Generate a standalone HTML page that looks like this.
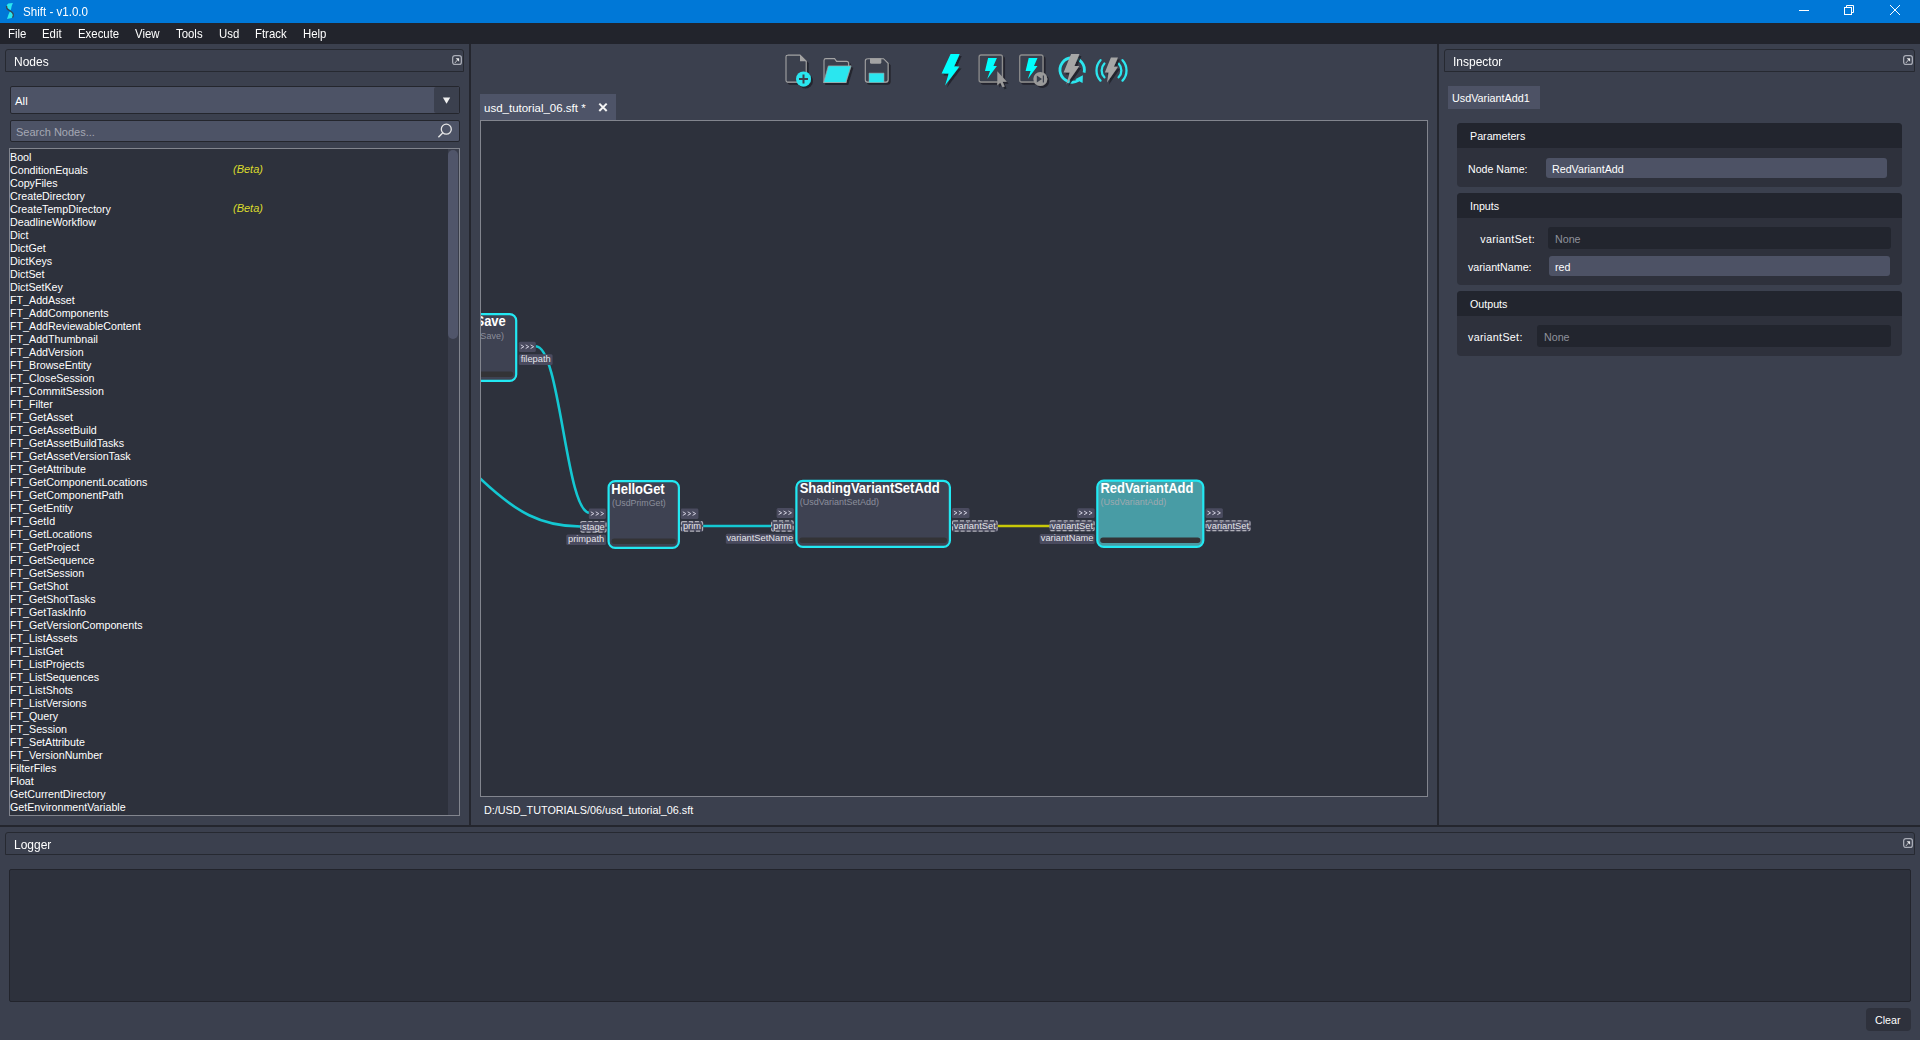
<!DOCTYPE html>
<html><head><meta charset="utf-8">
<style>
*{box-sizing:border-box;margin:0;padding:0}
html,body{width:1920px;height:1040px;overflow:hidden}
body{background:#3b404e;font-family:"Liberation Sans",sans-serif;color:#fff;position:relative}
.a{position:absolute}
.t{position:absolute;white-space:pre;line-height:1}
.hdr{position:absolute;height:23px;border:1px solid #262931;border-radius:3px 3px 0 0;background:#3b404e}
.li{position:absolute;left:0;white-space:pre;line-height:1;font-size:10.7px;color:#fff}
.li i{position:absolute;left:223px;top:-1px;color:#dcdc2c;font-style:italic;font-size:11px}
</style></head><body>
<div class="a" style="left:0px;top:0px;width:1920px;height:23px;background:#0078d7;"></div>
<div class="t" style="left:23px;top:6.20px;font-size:12.64px;color:#fff;transform:scaleX(0.9174);transform-origin:0 0;">Shift - v1.0.0</div>
<svg class="a" style="left:0;top:0" width="20" height="23" viewBox="0 0 20 23">
<path d="M6.5 7.6 Q6.2 4.6 8.4 3.6 L12.9 3 Q11.3 6 10.9 9.9 Q8.1 9.4 6.5 7.6 Z" fill="#2ae8f0"/>
<path d="M10 10.9 Q13.3 12.6 13.3 15.5 Q13.1 17.6 11.6 18.1 L7 19 Q8.2 14.8 10 10.9 Z" fill="#2ae8f0"/>
<path d="M6.6 5.8 Q6.1 8.7 9 10.3 Q13.6 12.3 13.3 15.4 Q13.1 16.8 12.4 17.6" fill="none" stroke="#3a3f4a" stroke-width="1.3" opacity="0.9"/>
</svg>
<svg class="a" style="left:1790px;top:0" width="130" height="23" viewBox="1790 0 130 23">
<path d="M1799 10.5 H1809" stroke="#fff" stroke-width="1"/>
<path d="M1846.5 7.5 V5.5 H1853.5 V12.5 H1851.5" fill="none" stroke="#fff" stroke-width="1"/>
<rect x="1844.5" y="7.5" width="7" height="7" fill="none" stroke="#fff" stroke-width="1"/>
<path d="M1890 5 L1900 15 M1900 5 L1890 15" stroke="#fff" stroke-width="1"/>
</svg>
<div class="a" style="left:0px;top:23px;width:1920px;height:21px;background:#22242c;"></div>
<div class="t" style="left:8px;top:28.18px;font-size:12.54px;color:#fff;transform:scaleX(0.9091);transform-origin:0 0;">File</div>
<div class="t" style="left:42px;top:28.18px;font-size:12.54px;color:#fff;transform:scaleX(0.9091);transform-origin:0 0;">Edit</div>
<div class="t" style="left:78px;top:28.18px;font-size:12.54px;color:#fff;transform:scaleX(0.9091);transform-origin:0 0;">Execute</div>
<div class="t" style="left:135px;top:28.18px;font-size:12.54px;color:#fff;transform:scaleX(0.9091);transform-origin:0 0;">View</div>
<div class="t" style="left:176px;top:28.18px;font-size:12.54px;color:#fff;transform:scaleX(0.9091);transform-origin:0 0;">Tools</div>
<div class="t" style="left:219px;top:28.18px;font-size:12.54px;color:#fff;transform:scaleX(0.9091);transform-origin:0 0;">Usd</div>
<div class="t" style="left:255px;top:28.18px;font-size:12.54px;color:#fff;transform:scaleX(0.9091);transform-origin:0 0;">Ftrack</div>
<div class="t" style="left:303px;top:28.18px;font-size:12.54px;color:#fff;transform:scaleX(0.9091);transform-origin:0 0;">Help</div>
<div class="a" style="left:469px;top:44px;width:2px;height:782px;background:#24262e;"></div>
<div class="a" style="left:1437px;top:44px;width:2px;height:782px;background:#24262e;"></div>
<div class="a" style="left:0px;top:825px;width:1920px;height:2px;background:#24262e;"></div>
<div class="hdr" style="left:5px;top:49px;width:459px"></div>
<div class="t" style="left:14px;top:55.93px;font-size:12.84px;color:#fff;transform:scaleX(0.9346);transform-origin:0 0;">Nodes</div>
<svg class="a" style="left:451px;top:54px" width="12" height="12" viewBox="0 0 12 12"><rect x="1.65" y="1.65" width="8.7" height="8.7" rx="2.2" fill="none" stroke="#a9acb6" stroke-width="1.3"/><path d="M4.6 4.3 H8.1 V7.8 Z" fill="#e8e8ea"/><path d="M3.9 8.6 L6.6 5.9" stroke="#d6d6da" stroke-width="1.1" stroke-dasharray="1 0.6"/></svg>
<div class="a" style="left:10px;top:86px;width:450px;height:28px;background:#4d5366;border:1px solid #24262d;border-radius:2px"></div>
<div class="a" style="left:434px;top:87px;width:25px;height:26px;background:#3b404e;border-radius:2px 2px 2px 2px"></div>
<div class="t" style="left:15px;top:96.25px;font-size:11.40px;color:#fff;">All</div>
<div class="a" style="left:10px;top:120px;width:450px;height:22px;background:#4d5366;border:1px solid #24262d;border-radius:2px"></div>
<div class="t" style="left:16px;top:126.59px;font-size:11.00px;color:#a5a8b4;">Search Nodes...</div>
<svg class="a" style="left:430px;top:88px" width="30" height="55" viewBox="430 88 30 55">
<path d="M442.9 97.6 H450.2 L446.55 103.8 Z" fill="#f0f0f0"/>
<circle cx="446.3" cy="129.2" r="5" fill="none" stroke="#e6e6e6" stroke-width="1.3"/>
<path d="M442.6 132.9 L438.4 137.2" stroke="#e6e6e6" stroke-width="1.4"/>
</svg>
<div class="a" style="left:9px;top:148px;width:451px;height:668px;background:#2d313c;border:1px solid #82858e"></div>
<div class="a" style="left:448px;top:149px;width:11px;height:666px;background:#393d4b;"></div>
<div class="a" style="left:448px;top:150px;width:10px;height:189px;background:#50556a;border-radius:5px"></div>
<div class="li" style="left:10px;top:151.54px">Bool</div>
<div class="li" style="left:10px;top:164.54px">ConditionEquals<i>(Beta)</i></div>
<div class="li" style="left:10px;top:177.54px">CopyFiles</div>
<div class="li" style="left:10px;top:190.54px">CreateDirectory</div>
<div class="li" style="left:10px;top:203.54px">CreateTempDirectory<i>(Beta)</i></div>
<div class="li" style="left:10px;top:216.54px">DeadlineWorkflow</div>
<div class="li" style="left:10px;top:229.54px">Dict</div>
<div class="li" style="left:10px;top:242.54px">DictGet</div>
<div class="li" style="left:10px;top:255.54px">DictKeys</div>
<div class="li" style="left:10px;top:268.54px">DictSet</div>
<div class="li" style="left:10px;top:281.54px">DictSetKey</div>
<div class="li" style="left:10px;top:294.54px">FT_AddAsset</div>
<div class="li" style="left:10px;top:307.54px">FT_AddComponents</div>
<div class="li" style="left:10px;top:320.54px">FT_AddReviewableContent</div>
<div class="li" style="left:10px;top:333.54px">FT_AddThumbnail</div>
<div class="li" style="left:10px;top:346.54px">FT_AddVersion</div>
<div class="li" style="left:10px;top:359.54px">FT_BrowseEntity</div>
<div class="li" style="left:10px;top:372.54px">FT_CloseSession</div>
<div class="li" style="left:10px;top:385.54px">FT_CommitSession</div>
<div class="li" style="left:10px;top:398.54px">FT_Filter</div>
<div class="li" style="left:10px;top:411.54px">FT_GetAsset</div>
<div class="li" style="left:10px;top:424.54px">FT_GetAssetBuild</div>
<div class="li" style="left:10px;top:437.54px">FT_GetAssetBuildTasks</div>
<div class="li" style="left:10px;top:450.54px">FT_GetAssetVersionTask</div>
<div class="li" style="left:10px;top:463.54px">FT_GetAttribute</div>
<div class="li" style="left:10px;top:476.54px">FT_GetComponentLocations</div>
<div class="li" style="left:10px;top:489.54px">FT_GetComponentPath</div>
<div class="li" style="left:10px;top:502.54px">FT_GetEntity</div>
<div class="li" style="left:10px;top:515.54px">FT_GetId</div>
<div class="li" style="left:10px;top:528.54px">FT_GetLocations</div>
<div class="li" style="left:10px;top:541.54px">FT_GetProject</div>
<div class="li" style="left:10px;top:554.54px">FT_GetSequence</div>
<div class="li" style="left:10px;top:567.54px">FT_GetSession</div>
<div class="li" style="left:10px;top:580.54px">FT_GetShot</div>
<div class="li" style="left:10px;top:593.54px">FT_GetShotTasks</div>
<div class="li" style="left:10px;top:606.54px">FT_GetTaskInfo</div>
<div class="li" style="left:10px;top:619.54px">FT_GetVersionComponents</div>
<div class="li" style="left:10px;top:632.54px">FT_ListAssets</div>
<div class="li" style="left:10px;top:645.54px">FT_ListGet</div>
<div class="li" style="left:10px;top:658.54px">FT_ListProjects</div>
<div class="li" style="left:10px;top:671.54px">FT_ListSequences</div>
<div class="li" style="left:10px;top:684.54px">FT_ListShots</div>
<div class="li" style="left:10px;top:697.54px">FT_ListVersions</div>
<div class="li" style="left:10px;top:710.54px">FT_Query</div>
<div class="li" style="left:10px;top:723.54px">FT_Session</div>
<div class="li" style="left:10px;top:736.54px">FT_SetAttribute</div>
<div class="li" style="left:10px;top:749.54px">FT_VersionNumber</div>
<div class="li" style="left:10px;top:762.54px">FilterFiles</div>
<div class="li" style="left:10px;top:775.54px">Float</div>
<div class="li" style="left:10px;top:788.54px">GetCurrentDirectory</div>
<div class="li" style="left:10px;top:801.54px">GetEnvironmentVariable</div>
<svg class="a" style="left:770px;top:44px" width="370" height="50" viewBox="770 44 370 50">
<defs>
<filter id="sh" x="-20%" y="-20%" width="150%" height="150%"><feOffset dx="1.5" dy="1.5" in="SourceAlpha" result="o"/><feFlood flood-color="#1e2028" flood-opacity="0.85"/><feComposite in2="o" operator="in" result="s"/><feMerge><feMergeNode in="s"/><feMergeNode in="SourceGraphic"/></feMerge></filter>
</defs>
<!-- new file -->
<g filter="url(#sh)">
<path d="M787.5 55.1 H800 L806.2 61.3 V80.5 Q806.2 82.1 804.6 82.1 H787.6 Q786 82.1 786 80.5 V56.7 Q786 55.1 787.6 55.1 Z" fill="#3b404e" stroke="#a3a3a3" stroke-width="1.1"/>
<path d="M800 55.1 V61.3 H806.2 Z" fill="#a3a3a3"/>
<circle cx="803.5" cy="78.9" r="7.5" fill="#2ce6ef"/>
<path d="M799 78.9 H808 M803.5 74.4 V83.4" stroke="#3b404e" stroke-width="2"/>
</g>
<!-- folder -->
<g filter="url(#sh)">
<path d="M824 81.8 V60.5 Q824 58.6 825.9 58.6 H834.6 L836.6 61.4 H846.6 Q848.6 61.4 848.6 63.4 V66.3 L845.8 82.5 H824 Z" fill="#3b404e" stroke="#a3a3a3" stroke-width="1.1"/>
<path d="M828.3 65.9 H851 L845.8 82.5 H823.6 Z" fill="#2ce6ef" stroke="#a3a3a3" stroke-width="0.7"/>
</g>
<!-- save -->
<g filter="url(#sh)">
<path d="M867.5 58.7 H883.5 L888.1 63.3 V79.8 Q888.1 82.1 885.8 82.1 H867.6 Q865.3 82.1 865.3 79.8 V61 Q865.3 58.7 867.6 58.7 Z" fill="#3b404e" stroke="#a3a3a3" stroke-width="1.1"/>
<path d="M870 58.3 H881.3 V62.3 Q881.3 63.8 879.8 63.8 H871.5 Q870 63.8 870 62.3 Z" fill="#a3a3a3"/>
<rect x="869" y="73.1" width="15" height="9.2" fill="#2ce6ef"/>
<path d="M869 82.3 V73.1 H884 V82.3" fill="none" stroke="#a3a3a3" stroke-width="0.6"/>
</g>
<!-- lightning -->
<g filter="url(#sh)">
<path d="M950.6 53.9 H959.7 L954 66.4 H959.4 L945 85.5 L948.75 73.6 H941.6 Z" fill="#00ffff"/>
</g>
<!-- execute selected -->
<g filter="url(#sh)">
<rect x="979.1" y="55" width="23.3" height="27" rx="2" fill="#3b404e" stroke="#8c8c8c" stroke-width="1.3"/>
<path d="M988.1 58 H996.9 L993.4 66.1 H996.9 L987.2 78.9 L990 71.1 H985 Z" fill="#00ffff"/>
<path d="M997.3 71.3 L1006.8 81.8 L1002.6 81.8 L1004.6 86.4 L1002.5 87.2 L1000.3 82.6 L997.3 85.4 Z" fill="#9a9a9a"/>
</g>
<!-- execute to -->
<g filter="url(#sh)">
<rect x="1019.7" y="55" width="23.3" height="27" rx="2" fill="#3b404e" stroke="#8c8c8c" stroke-width="1.3"/>
<path d="M1028.7 58 H1037.5 L1034 66.1 H1037.5 L1027.8 78.9 L1030.6 71.1 H1025.6 Z" fill="#00ffff"/>
<circle cx="1040.3" cy="79" r="7" fill="#9a9a9a"/>
<path d="M1036.8 75.4 L1042 79 L1036.8 82.6 Z M1042.8 75.4 H1044 V82.6 H1042.8 Z" fill="#3b404e"/>
</g>
<!-- refresh execute -->
<path d="M1084.1 72.6 A12.2 12.2 0 1 0 1078.5 80.4" fill="none" stroke="#2ce6ef" stroke-width="2.8"/>
<path d="M1082.9 75.2 L1082.6 82.9 L1075.2 79.3 Z" fill="#2ce6ef"/>
<g filter="url(#sh)">
<path d="M1071.1 54.1 H1079.5 L1074.4 66 H1079.3 L1066.4 84.6 L1069.7 72.4 H1063.6 Z" fill="#a6a6a6"/>
</g>
<!-- continuous -->
<path d="M1100.5 60.2 A15 15 0 0 0 1100.5 80.6 M1104.4 63.5 A10 10 0 0 0 1104.4 77.3 M1122.5 60.2 A15 15 0 0 1 1122.5 80.6 M1118.6 63.5 A10 10 0 0 1 1118.6 77.3" fill="none" stroke="#2ce6ef" stroke-width="2.3" stroke-linecap="round"/>
<g filter="url(#sh)">
<path d="M1110.9 57.6 H1118 L1113.8 66.75 H1118 L1107 82.5 L1108.6 72.4 H1104.85 Z" fill="#a6a6a6"/>
</g>
</svg>

<div class="a" style="left:480px;top:94px;width:136px;height:26px;background:#4e5468;"></div>
<div class="t" style="left:484px;top:102.67px;font-size:11.50px;color:#fff;">usd_tutorial_06.sft *</div>
<svg class="a" style="left:596px;top:100px" width="14" height="14" viewBox="596 100 14 14">
<path d="M599.3 103.6 L606.7 111 M606.7 103.6 L599.3 111" stroke="#f4f4f4" stroke-width="2"/>
</svg>
<div class="a" style="left:480px;top:120px;width:948px;height:677px;background:#2d313c;border:1px solid #82858e"></div>
<svg class="a" style="left:481px;top:121px" width="946" height="675" viewBox="481 121 946 675">
<g font-family="Liberation Sans">
<path d="M478.9 477.3 L481.2 479.5 C515.9 512.1 541.1 526.5 580.5 526.5" fill="none" stroke="#14c8d2" stroke-width="2.6"/>
<path d="M535.7 346.3 C560.4 346.3 565.9 512.7 589.5 512.7" fill="none" stroke="#14c8d2" stroke-width="2.6"/>
<path d="M703 526 H772" stroke="#14c8d2" stroke-width="2.6"/>
<path d="M997 526 H1050" stroke="#c8c808" stroke-width="2.4"/>
<rect x="441.1" y="314.1" width="75.09999999999995" height="66.8" rx="6.5" fill="#3e4252" stroke="#22e8f2" stroke-width="2.2"/>
<rect x="444" y="371.5" width="69.29999999999995" height="5.5" rx="2.75" fill="#333336"/>
<text transform="translate(505.8,326.4) scale(0.8772,1)" x="0" y="0" font-size="14.82" fill="#fff" font-weight="bold" text-anchor="end">Save</text>
<text x="503.9" y="339" font-size="9" fill="#8b8e9b" font-weight="normal" text-anchor="end">(Save)</text>
<rect x="518.8" y="341.8" width="17.0" height="10.199999999999989" rx="1.5" fill="#4a4b5f"/>
<path d="M520.80 344.90 L523.90 346.70 L520.80 348.50 M525.70 344.90 L528.80 346.70 L525.70 348.50 M530.60 344.90 L533.70 346.70 L530.60 348.50 " fill="none" stroke="#cdcbdb" stroke-width="1.0" stroke-linejoin="miter"/>
<rect x="518.8" y="354.3" width="33.80000000000007" height="10.699999999999989" rx="1.5" fill="#4a4b5f"/>
<text x="535.7" y="362.4" font-size="9.3" fill="#e4e4ea" text-anchor="middle">filepath</text>
<rect x="608.6" y="481.1" width="70.3" height="66.8" rx="6.5" fill="#3e4252" stroke="#22e8f2" stroke-width="2.2"/>
<rect x="611.5" y="538.5" width="64.5" height="5.5" rx="2.75" fill="#333336"/>
<text transform="translate(611.3,494) scale(0.8772,1)" x="0" y="0" font-size="14.82" fill="#fff" font-weight="bold" text-anchor="start">HelloGet</text>
<text x="612" y="505.5" font-size="8.8" fill="#8b8e9b" font-weight="normal" text-anchor="start">(UsdPrimGet)</text>
<rect x="588.8" y="508.6" width="17.100000000000023" height="10.399999999999977" rx="1.5" fill="#4a4b5f"/>
<path d="M590.80 511.80 L593.90 513.60 L590.80 515.40 M595.70 511.80 L598.80 513.60 L595.70 515.40 M600.60 511.80 L603.70 513.60 L600.60 515.40 " fill="none" stroke="#cdcbdb" stroke-width="1.0" stroke-linejoin="miter"/>
<rect x="580.2" y="520.9" width="26.399999999999977" height="11.800000000000068" rx="1.5" fill="#4a4b5f"/>
<rect x="580.8000000000001" y="521.5" width="25.199999999999978" height="10.600000000000069" rx="1.5" fill="none" stroke="#b0b0b8" stroke-width="1.1" stroke-dasharray="4 2"/>
<text x="593.4000000000001" y="530.1" font-size="9.3" fill="#e4e4ea" text-anchor="middle">stage</text>
<rect x="566.25" y="534.4" width="39.75" height="10.600000000000023" rx="1.5" fill="#4a4b5f"/>
<text x="586.125" y="542.4" font-size="9.3" fill="#e4e4ea" text-anchor="middle">primpath</text>
<rect x="680.8" y="508.6" width="17.600000000000023" height="10.399999999999977" rx="1.5" fill="#4a4b5f"/>
<path d="M682.80 511.80 L685.90 513.60 L682.80 515.40 M687.70 511.80 L690.80 513.60 L687.70 515.40 M692.60 511.80 L695.70 513.60 L692.60 515.40 " fill="none" stroke="#cdcbdb" stroke-width="1.0" stroke-linejoin="miter"/>
<rect x="680.8" y="521" width="22.40000000000009" height="10.700000000000045" rx="1.5" fill="#4a4b5f"/>
<rect x="681.4" y="521.6" width="21.20000000000009" height="9.500000000000046" rx="1.5" fill="none" stroke="#b0b0b8" stroke-width="1.1" stroke-dasharray="4 2"/>
<text x="692.0" y="529.1" font-size="9.3" fill="#e4e4ea" text-anchor="middle">prim</text>
<rect x="796.4" y="480.8" width="153.50000000000006" height="66.10000000000001" rx="6.5" fill="#3e4252" stroke="#22e8f2" stroke-width="2.2"/>
<rect x="799.3" y="537.5" width="147.70000000000005" height="5.5" rx="2.75" fill="#333336"/>
<text transform="translate(799.7,492.7) scale(0.8772,1)" x="0" y="0" font-size="14.82" fill="#fff" font-weight="bold" text-anchor="start">ShadingVariantSetAdd</text>
<text x="799.7" y="504.5" font-size="9" fill="#8b8e9b" font-weight="normal" text-anchor="start">(UsdVariantSetAdd)</text>
<rect x="776.6" y="508" width="17.149999999999977" height="10" rx="1.5" fill="#4a4b5f"/>
<path d="M778.60 511.00 L781.70 512.80 L778.60 514.60 M783.50 511.00 L786.60 512.80 L783.50 514.60 M788.40 511.00 L791.50 512.80 L788.40 514.60 " fill="none" stroke="#cdcbdb" stroke-width="1.0" stroke-linejoin="miter"/>
<rect x="771" y="520.3" width="22.75" height="11.400000000000091" rx="1.5" fill="#4a4b5f"/>
<rect x="771.6" y="520.9" width="21.55" height="10.200000000000092" rx="1.5" fill="none" stroke="#b0b0b8" stroke-width="1.1" stroke-dasharray="4 2"/>
<text x="782.375" y="529.1" font-size="9.3" fill="#e4e4ea" text-anchor="middle">prim</text>
<rect x="725.8" y="533.75" width="67.95000000000005" height="10.0" rx="1.5" fill="#4a4b5f"/>
<text x="759.775" y="541.15" font-size="9.3" fill="#e4e4ea" text-anchor="middle">variantSetName</text>
<rect x="951.9" y="508" width="17.600000000000023" height="10" rx="1.5" fill="#4a4b5f"/>
<path d="M953.90 511.00 L957.00 512.80 L953.90 514.60 M958.80 511.00 L961.90 512.80 L958.80 514.60 M963.70 511.00 L966.80 512.80 L963.70 514.60 " fill="none" stroke="#cdcbdb" stroke-width="1.0" stroke-linejoin="miter"/>
<rect x="951.9" y="520.3" width="45.80000000000007" height="11.400000000000091" rx="1.5" fill="#4a4b5f"/>
<rect x="952.5" y="520.9" width="44.600000000000065" height="10.200000000000092" rx="1.5" fill="none" stroke="#b0b0b8" stroke-width="1.1" stroke-dasharray="4 2"/>
<text x="974.8" y="529.1" font-size="9.3" fill="#e4e4ea" text-anchor="middle">variantSet</text>
<rect x="1097.3" y="480.6" width="106.00000000000004" height="66.3" rx="6.5" fill="#489ca5" stroke="#22e8f2" stroke-width="2.2"/>
<rect x="1100.2" y="537.5" width="100.20000000000005" height="5.5" rx="2.75" fill="#333336"/>
<text transform="translate(1100.4,492.6) scale(0.8772,1)" x="0" y="0" font-size="14.82" fill="#fff" font-weight="bold" text-anchor="start">RedVariantAdd</text>
<text x="1100.4" y="504.7" font-size="9" fill="#9fa9b0" font-weight="normal" text-anchor="start">(UsdVariantAdd)</text>
<rect x="1077.2" y="508.2" width="17.5" height="9.800000000000011" rx="1.5" fill="#4a4b5f"/>
<path d="M1079.20 511.10 L1082.30 512.90 L1079.20 514.70 M1084.10 511.10 L1087.20 512.90 L1084.10 514.70 M1089.00 511.10 L1092.10 512.90 L1089.00 514.70 " fill="none" stroke="#cdcbdb" stroke-width="1.0" stroke-linejoin="miter"/>
<rect x="1049.5" y="520.3" width="45.200000000000045" height="10.950000000000045" rx="1.5" fill="#4a4b5f"/>
<rect x="1050.1" y="520.9" width="44.00000000000004" height="9.750000000000046" rx="1.5" fill="none" stroke="#b0b0b8" stroke-width="1.1" stroke-dasharray="4 2"/>
<text x="1072.1" y="528.65" font-size="9.3" fill="#e4e4ea" text-anchor="middle">variantSet</text>
<rect x="1039.6" y="533.9" width="55.100000000000136" height="10.100000000000023" rx="1.5" fill="#4a4b5f"/>
<text x="1067.15" y="541.4" font-size="9.3" fill="#e4e4ea" text-anchor="middle">variantName</text>
<rect x="1205.5" y="508.2" width="17.40000000000009" height="9.800000000000011" rx="1.5" fill="#4a4b5f"/>
<path d="M1207.50 511.10 L1210.60 512.90 L1207.50 514.70 M1212.40 511.10 L1215.50 512.90 L1212.40 514.70 M1217.30 511.10 L1220.40 512.90 L1217.30 514.70 " fill="none" stroke="#cdcbdb" stroke-width="1.0" stroke-linejoin="miter"/>
<rect x="1205.5" y="520.3" width="45.09999999999991" height="10.950000000000045" rx="1.5" fill="#4a4b5f"/>
<rect x="1206.1" y="520.9" width="43.899999999999906" height="9.750000000000046" rx="1.5" fill="none" stroke="#b0b0b8" stroke-width="1.1" stroke-dasharray="4 2"/>
<text x="1228.05" y="528.65" font-size="9.3" fill="#e4e4ea" text-anchor="middle">variantSet</text>
</g></svg>
<div class="t" style="left:484px;top:805.06px;font-size:10.80px;color:#fff;">D:/USD_TUTORIALS/06/usd_tutorial_06.sft</div>
<div class="hdr" style="left:1444px;top:49px;width:471px"></div>
<div class="t" style="left:1453px;top:55.93px;font-size:12.84px;color:#fff;transform:scaleX(0.9346);transform-origin:0 0;">Inspector</div>
<svg class="a" style="left:1902px;top:54px" width="12" height="12" viewBox="0 0 12 12"><rect x="1.65" y="1.65" width="8.7" height="8.7" rx="2.2" fill="none" stroke="#a9acb6" stroke-width="1.3"/><path d="M4.6 4.3 H8.1 V7.8 Z" fill="#e8e8ea"/><path d="M3.9 8.6 L6.6 5.9" stroke="#d6d6da" stroke-width="1.1" stroke-dasharray="1 0.6"/></svg>
<div class="a" style="left:1448px;top:86px;width:92px;height:23px;background:#4d5265;"></div>
<div class="t" style="left:1452px;top:93.26px;font-size:10.80px;color:#fff;">UsdVariantAdd1</div>
<div class="a" style="left:1457px;top:123px;width:445px;height:64px;background:#2e313c;border-radius:4px"></div>
<div class="a" style="left:1457px;top:123px;width:445px;height:25px;background:#22252e;border-radius:4px 4px 0 0"></div>
<div class="t" style="left:1470px;top:130.94px;font-size:10.70px;color:#fff;">Parameters</div>
<div class="t" style="left:1468px;top:164.23px;font-size:10.60px;color:#fff;">Node Name:</div>
<div class="a" style="left:1546px;top:158px;width:341px;height:20px;background:#4d5265;border-radius:3px"></div>
<div class="t" style="left:1552px;top:164.14px;font-size:10.70px;color:#fff;">RedVariantAdd</div>
<div class="a" style="left:1457px;top:193px;width:445px;height:92px;background:#2e313c;border-radius:4px"></div>
<div class="a" style="left:1457px;top:193px;width:445px;height:25px;background:#22252e;border-radius:4px 4px 0 0"></div>
<div class="t" style="left:1470px;top:201.34px;font-size:10.70px;color:#fff;">Inputs</div>
<div class="t" style="left:1535px;top:234.44px;font-size:10.70px;color:#fff;transform:translateX(-100%);letter-spacing:0.33px">variantSet:</div>
<div class="a" style="left:1548px;top:227px;width:343px;height:22px;background:#22252e;border-radius:3px"></div>
<div class="t" style="left:1555px;top:234.44px;font-size:10.70px;color:#8f929c;">None</div>
<div class="t" style="left:1468px;top:262.44px;font-size:10.70px;color:#fff;">variantName:</div>
<div class="a" style="left:1549px;top:256px;width:341px;height:20px;background:#4d5265;border-radius:3px"></div>
<div class="t" style="left:1555px;top:262.44px;font-size:10.70px;color:#fff;">red</div>
<div class="a" style="left:1457px;top:291px;width:445px;height:65px;background:#2e313c;border-radius:4px"></div>
<div class="a" style="left:1457px;top:291px;width:445px;height:25px;background:#22252e;border-radius:4px 4px 0 0"></div>
<div class="t" style="left:1470px;top:298.94px;font-size:10.70px;color:#fff;">Outputs</div>
<div class="t" style="left:1468px;top:331.69px;font-size:10.70px;color:#fff;letter-spacing:0.33px">variantSet:</div>
<div class="a" style="left:1537px;top:325px;width:354px;height:22px;background:#22252e;border-radius:3px"></div>
<div class="t" style="left:1544px;top:331.69px;font-size:10.70px;color:#8f929c;">None</div>
<div class="hdr" style="left:5px;top:832px;width:1910px"></div>
<div class="t" style="left:14px;top:839.13px;font-size:12.84px;color:#fff;transform:scaleX(0.9346);transform-origin:0 0;">Logger</div>
<svg class="a" style="left:1902px;top:837px" width="12" height="12" viewBox="0 0 12 12"><rect x="1.65" y="1.65" width="8.7" height="8.7" rx="2.2" fill="none" stroke="#a9acb6" stroke-width="1.3"/><path d="M4.6 4.3 H8.1 V7.8 Z" fill="#e8e8ea"/><path d="M3.9 8.6 L6.6 5.9" stroke="#d6d6da" stroke-width="1.1" stroke-dasharray="1 0.6"/></svg>
<div class="a" style="left:9px;top:869px;width:1902px;height:133px;background:#2d313c;border-radius:2px;border:1px solid #22242c"></div>
<div class="a" style="left:1866px;top:1008px;width:45px;height:23px;background:#2e313c;border-radius:4px"></div>
<div class="t" style="left:1875px;top:1015.04px;font-size:10.70px;color:#fff;">Clear</div>
</body></html>
